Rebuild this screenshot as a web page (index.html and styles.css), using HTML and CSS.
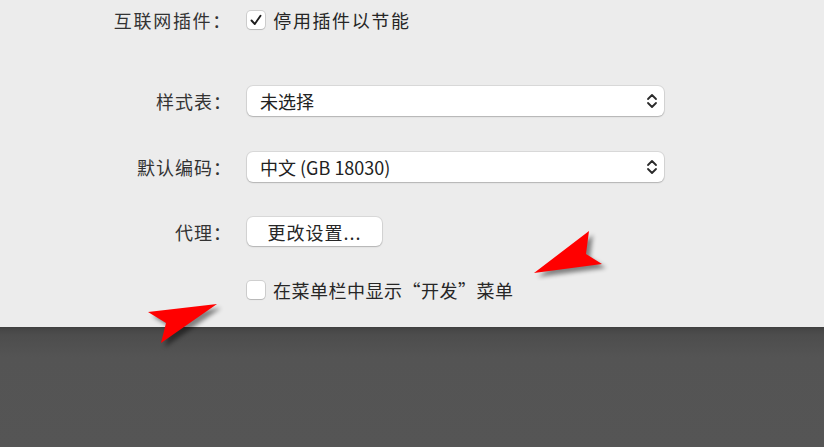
FILE: index.html
```html
<!DOCTYPE html>
<html lang="zh-CN">
<head>
<meta charset="utf-8">
<title>高级</title>
<link rel="stylesheet" href="styles.css">
</head>
<body>
<div class="page">
  <div class="panel">
    <div class="row row-plugins">
      <div class="label">互联网插件：</div>
      <div class="control">
        <span class="checkbox"><svg viewBox="0 0 18 18" width="18" height="18"><polyline points="4.5,9.5 7.8,13 13.5,4.8" fill="none" stroke="#1d1d1d" stroke-width="1.9" stroke-linecap="round" stroke-linejoin="round"/></svg></span>
        <span class="check-text">停用插件以节能</span>
      </div>
    </div>
    <div class="row row-style">
      <div class="label">样式表：</div>
      <div class="control">
        <div class="popup"><span>未选择</span>
          <svg class="chev" viewBox="0 0 14 20" width="14" height="20"><polyline points="3,8 7,4 11,8" fill="none" stroke="#2a2a2a" stroke-width="1.8" stroke-linecap="round" stroke-linejoin="round"/><polyline points="3,12 7,16 11,12" fill="none" stroke="#2a2a2a" stroke-width="1.8" stroke-linecap="round" stroke-linejoin="round"/></svg>
        </div>
      </div>
    </div>
    <div class="row row-enc">
      <div class="label">默认编码：</div>
      <div class="control">
        <div class="popup"><span>中文 (GB 18030)</span>
          <svg class="chev" viewBox="0 0 14 20" width="14" height="20"><polyline points="3,8 7,4 11,8" fill="none" stroke="#2a2a2a" stroke-width="1.8" stroke-linecap="round" stroke-linejoin="round"/><polyline points="3,12 7,16 11,12" fill="none" stroke="#2a2a2a" stroke-width="1.8" stroke-linecap="round" stroke-linejoin="round"/></svg>
        </div>
      </div>
    </div>
    <div class="row row-proxy">
      <div class="label">代理：</div>
      <div class="control">
        <button class="btn">更改设置...</button>
      </div>
    </div>
    <div class="row row-dev">
      <div class="label"></div>
      <div class="control">
        <span class="checkbox"></span>
        <span class="check-text">在菜单栏中显示“开发”菜单</span>
      </div>
    </div>
  </div>
  <div class="bottom"></div>
  <svg class="annotations" viewBox="0 0 824 447" width="824" height="447">
    <polygon points="534,273 589,231 586,254 602,264" fill="#ff0000"/>
    <polygon points="148,312 217,304 161,343 166,323" fill="#ff0000"/>
  </svg>
</div>
</body>
</html>
```
FILE: styles.css
```css
html, body {
  margin: 0;
  padding: 0;
}
body {
  width: 824px;
  height: 447px;
  overflow: hidden;
  font-family: "Noto Sans CJK SC", "Noto Sans", sans-serif;
  background: #ececec;
}
.page {
  position: relative;
  width: 824px;
  height: 447px;
  display: flex;
  flex-direction: column;
}
.panel {
  height: 327px;
  background: #ececec;
  display: flex;
  flex-direction: column;
  box-sizing: border-box;
  padding-top: 5px;
}
.row {
  display: flex;
  align-items: center;
  height: 30px;
  gap: 16px;
}
.row-style { margin-top: 51px; }
.row-enc { margin-top: 36px; }
.row-proxy { margin-top: 35px; height: 29px; }
.row-dev { margin-top: 29px; height: 29px; }
.label {
  width: 232px;
  text-align: right;
  font-size: 18px;
  color: #333;
  letter-spacing: 1px;
  margin-right: -1px;
}
.row-plugins .label {
  letter-spacing: 1.7px;
  margin-right: -1.7px;
}
.control {
  display: flex;
  align-items: center;
  width: 417px;
}
.checkbox {
  width: 18px;
  height: 18px;
  background: #fff;
  border-radius: 4px;
  box-shadow: 0 0 0 1px rgba(0,0,0,0.12), 0 1px 1px rgba(0,0,0,0.12);
  display: flex;
  flex: none;
}
.row-plugins .checkbox {
  margin-left: 1px;
}
.check-text {
  margin-left: 8px;
  font-size: 18px;
  color: #262626;
  letter-spacing: 0.5px;
}
.row-plugins .check-text {
  letter-spacing: 1.6px;
}
.popup {
  width: 417px;
  height: 30px;
  box-sizing: border-box;
  background: #fff;
  border-radius: 6px;
  box-shadow: 0 0 0 1px rgba(0,0,0,0.08), 0 1px 1.5px rgba(0,0,0,0.18);
  display: flex;
  align-items: center;
  justify-content: space-between;
  padding: 0 5px 0 13px;
  font-size: 18px;
  color: #222;
}
.chev { flex: none; }
.btn {
  width: 135px;
  height: 29px;
  border: none;
  background: #fff;
  border-radius: 6px;
  box-shadow: 0 0 0 1px rgba(0,0,0,0.08), 0 1px 1.5px rgba(0,0,0,0.18);
  font-family: "Noto Sans CJK SC", "Noto Sans", sans-serif;
  font-size: 18px;
  color: #262626;
  padding: 0;
  letter-spacing: 1px;
}
.bottom {
  flex: 1;
  background: linear-gradient(#3f3f3f 0, #474747 3px, #4d4d4d 8px, #545454 30px, #555555 100%);
}
.annotations {
  position: absolute;
  left: 0;
  top: 0;
  pointer-events: none;
  filter: drop-shadow(4px 4px 2px rgba(0,0,0,0.45));
}
```
